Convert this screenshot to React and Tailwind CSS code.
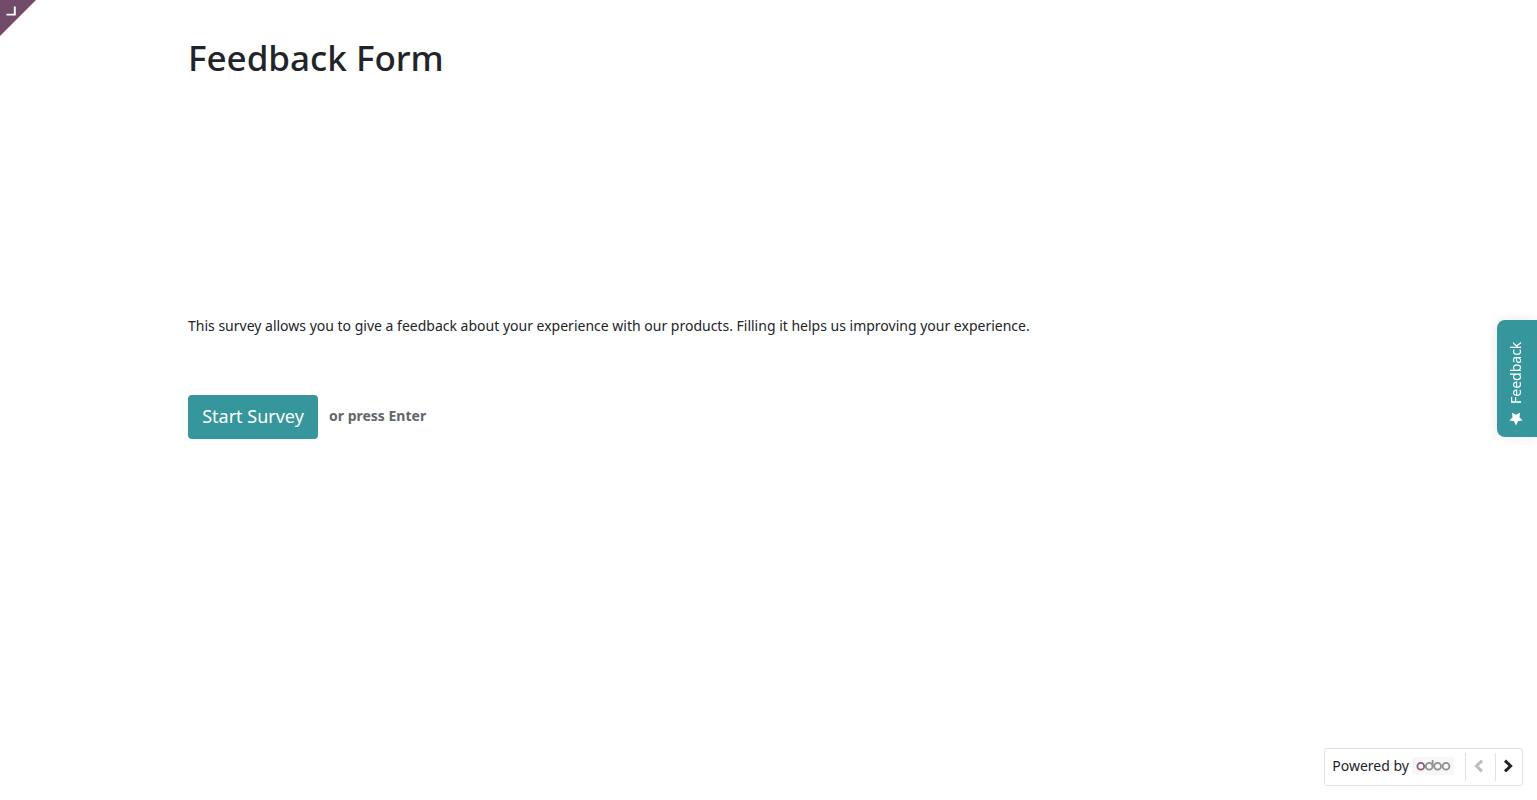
import React from "react";

function OdooLogo() {
  return (
    <svg viewBox="0 0 42 18" className="h-[18px] w-[42px]" role="img" aria-label="odoo">
      <rect width="42" height="18" rx="3" fill="#f7f7f7" />
      <g fill="none" strokeWidth="1.8">
        <circle cx="8.8" cy="9.3" r="3.4" stroke="#875a7b" />
        <g stroke="#8f8f8f">
          <circle cx="17.2" cy="9.3" r="3.4" />
          <path d="M20.6 3V9.3" />
          <circle cx="25.6" cy="9.3" r="3.4" />
          <circle cx="34" cy="9.3" r="3.4" />
        </g>
      </g>
    </svg>
  );
}

function Chevron({ direction }) {
  return (
    <svg viewBox="0 0 14 14" className="size-3.5" fill="none" stroke="currentColor" strokeWidth="3" aria-hidden="true">
      <path d={direction === "left" ? "M10 1.6L4.4 7L10 12.4" : "M4 1.6L9.6 7L4 12.4"} />
    </svg>
  );
}

export default function App() {
  return (
    <div className="relative flex min-h-screen flex-col bg-white font-['Noto_Sans',sans-serif] text-sm text-[#212529]">
      <a href="#backend" aria-label="Back to the backend" className="absolute left-0 top-0">
        <svg viewBox="0 0 36 36" className="size-9" aria-hidden="true">
          <path d="M0 0H36L0 36Z" fill="#714b67" />
          <path d="M14.8 6.5V14.6H6.5" fill="none" stroke="#fff" strokeWidth="1.9" />
        </svg>
      </a>

      <main className="mx-auto w-full max-w-[1161px] pt-9">
        <h1 className="text-[35px] font-medium leading-11">Feedback Form</h1>
        <p className="mt-59 leading-5">
          This survey allows you to give a feedback about your experience with our products. Filling it helps us improving your experience.
        </p>
        <div className="mt-[59px] flex items-center gap-[11px]">
          <button type="button" className="h-11 w-[130px] rounded bg-[#35979c] pb-0.5 text-lg text-white">
            Start Survey
          </button>
          <span className="pb-0.5 font-bold text-[#62676b]">or press Enter</span>
        </div>
      </main>

      <button
        type="button"
        className="fixed right-0 top-80 flex h-[117px] w-10 rotate-180 items-center justify-start gap-2 rounded-r-lg bg-[#35979c] pl-0.5 pt-[11px] text-white shadow-[0_0_12px_rgba(0,0,0,0.1)] [writing-mode:vertical-rl]"
      >
        <svg viewBox="0 0 14 14" className="size-3.5" fill="currentColor" aria-hidden="true">
          <path d="M7 0.6L9.1 4.9L13.7 5.6L10.4 8.8L11.2 13.4L7 11.2L2.8 13.4L3.6 8.8L0.3 5.6L4.9 4.9Z" />
        </svg>
        <span>Feedback</span>
      </button>

      <footer className="fixed bottom-3.5 right-3.5 flex h-[38px] items-center rounded-[3px] border border-[#dee2e6] bg-white pl-[7px]">
        <span className="mr-[3px] pb-0.5">Powered by</span>
        <a href="#odoo" aria-label="odoo" className="pb-0.5"><OdooLogo /></a>
        <button type="button" disabled aria-label="Previous page" className="ml-[11px] flex h-7 w-[30px] items-center justify-center border-l border-[#dee2e6] pb-0.5 pr-[3px] text-[#bcbebf]">
          <Chevron direction="left" />
        </button>
        <button type="button" aria-label="Next page" className="flex h-7 w-[27px] items-center justify-center border-l border-[#dee2e6] pb-0.5 pr-[3px]">
          <Chevron direction="right" />
        </button>
      </footer>
    </div>
  );
}
